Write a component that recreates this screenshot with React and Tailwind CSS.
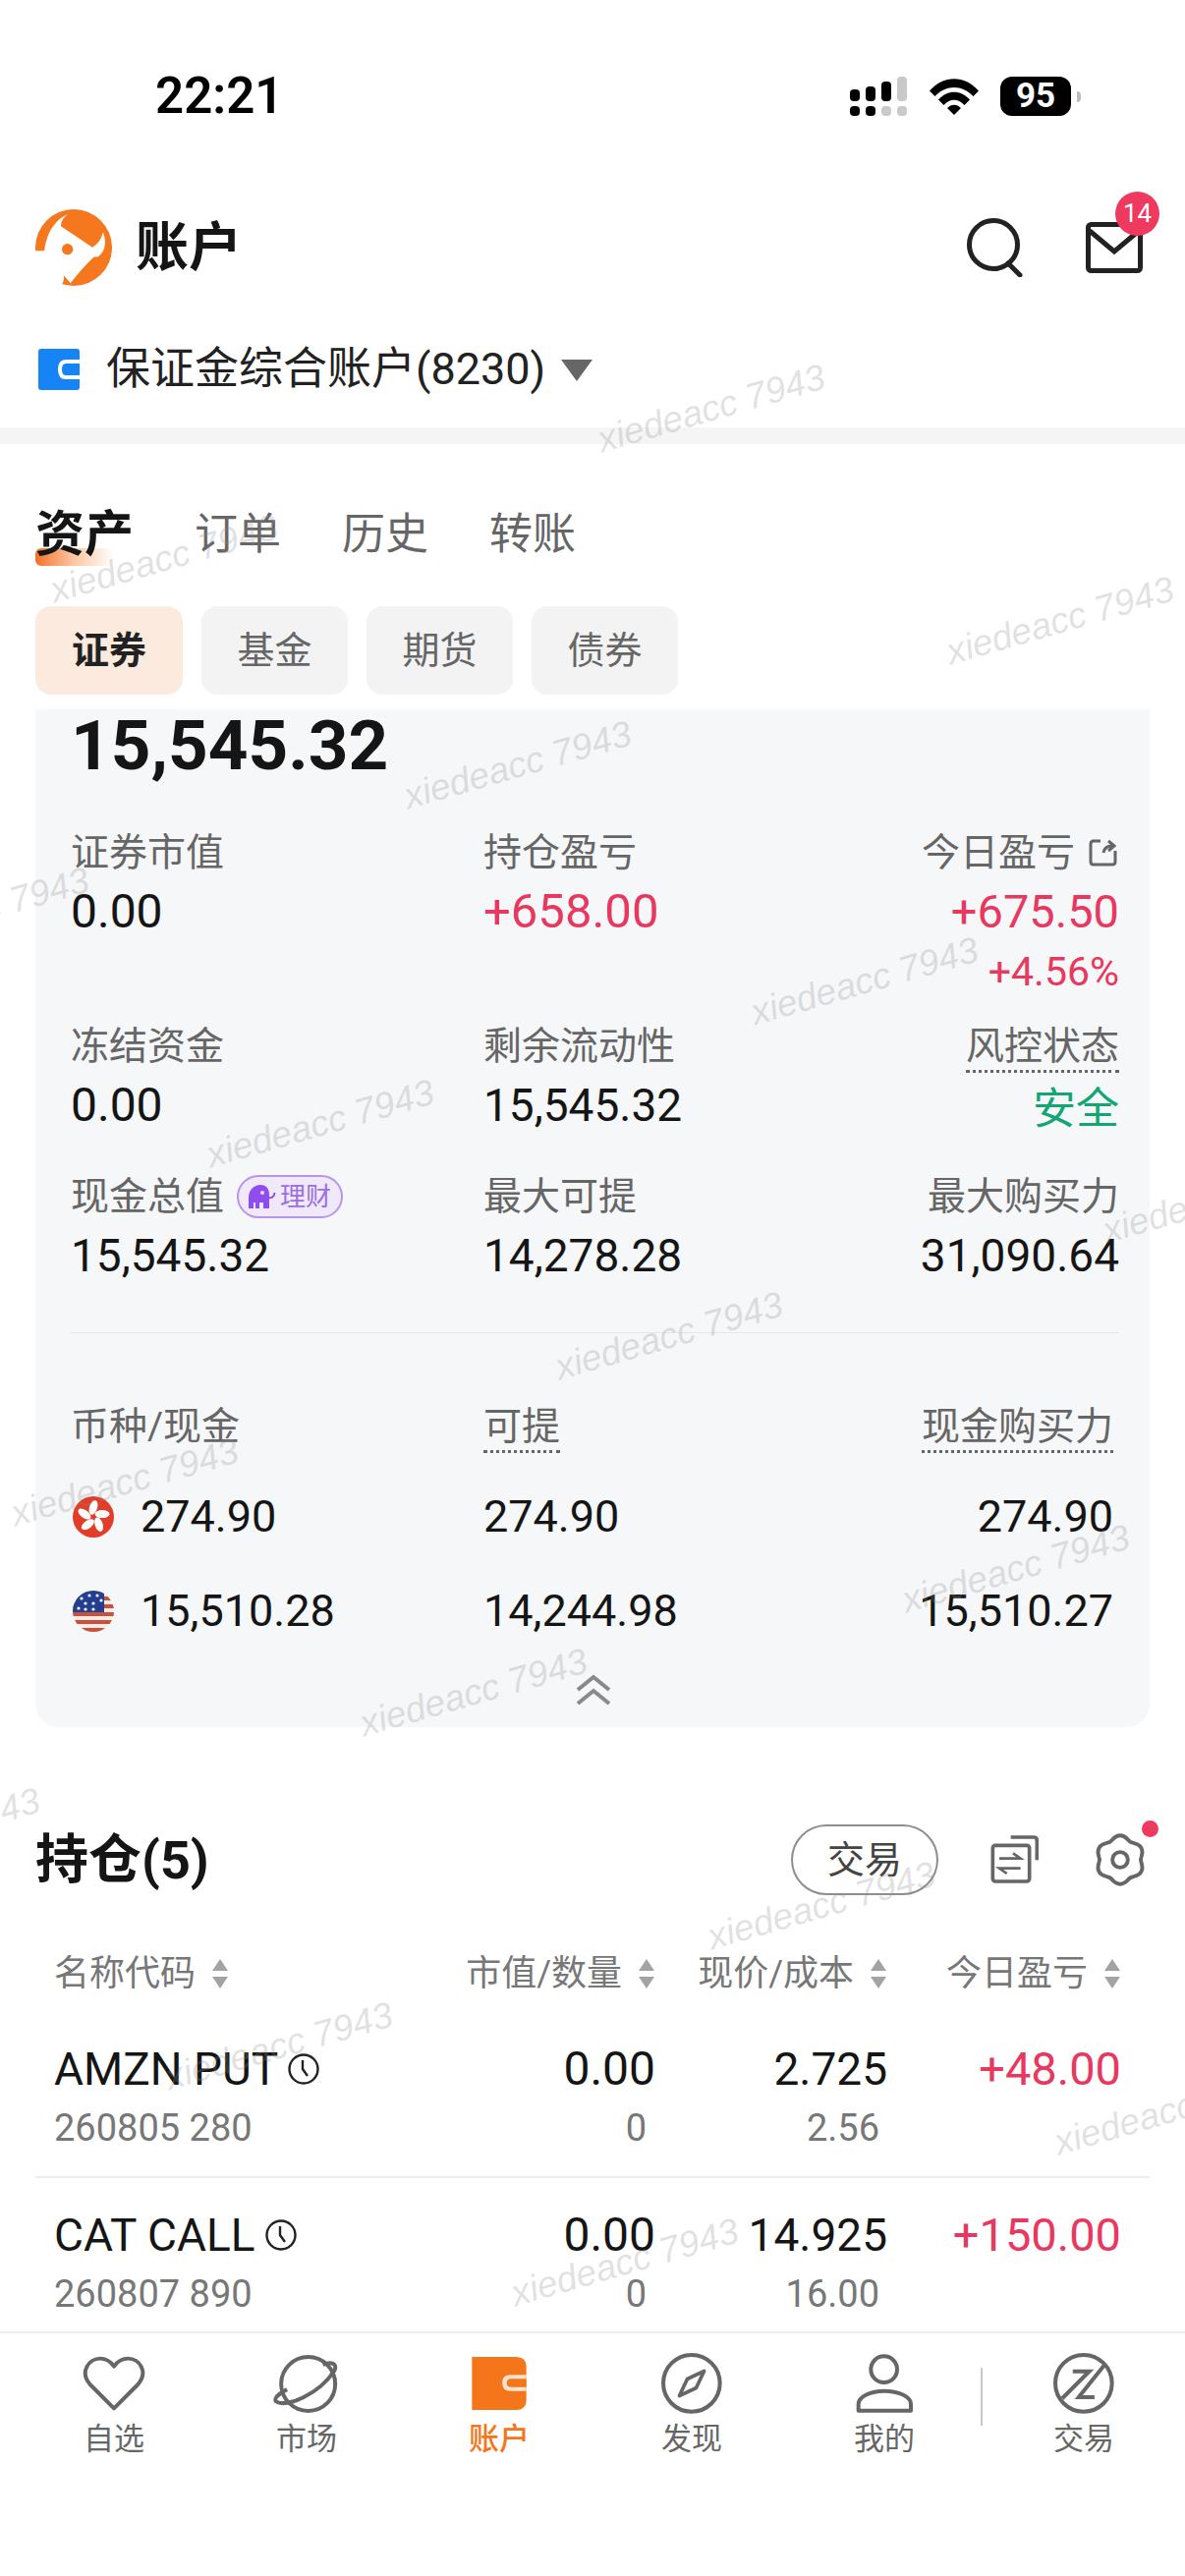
const watermarks = [
  'left-[604px] top-[394px]',
  'left-[47px] top-[547px]',
  'left-[959px] top-[610px]',
  'left-[407px] top-[757px]',
  'left-[760px] top-[977px]',
  'left-[206px] top-[1122px]',
  'left-[561px] top-[1338px]',
  'left-[7px] top-[1487px]',
  'left-[914px] top-[1575px]',
  'left-[362px] top-[1701px]',
  'left-[716px] top-[1918px]',
  'left-[164px] top-[2061px]',
  'left-[516px] top-[2281px]',
  'left-[-145px] top-[906px]',
  'left-[1118px] top-[1199px]',
  'left-[-195px] top-[1843px]',
  'left-[1069px] top-[2127px]',
];

const gearPath = (() => {
  const pt = (r, deg) => {
    const a = (deg * Math.PI) / 180;
    return `${(50 + r * Math.cos(a)).toFixed(1)} ${(50 + r * Math.sin(a)).toFixed(1)}`;
  };
  let d = `M${pt(39, -112)}`;
  for (let k = 0; k < 6; k++) {
    const a = -90 + k * 60;
    d += ` Q${pt(52, a)} ${pt(39, a + 22)} Q${pt(36, a + 30)} ${pt(39, a + 38)}`;
  }
  return d + 'Z';
})();

function Logo() {
  return (
    <svg width="78" height="78" viewBox="48 70 234 234">
      <circle cx="165" cy="187" r="117" fill="#f5781e" />
      <path
        d="M30 197 L75 197 Q82 150 100 125 Q115 100 148 84 Q125 100 126 122 L222 186 Q245 175 255 140 Q272 190 240 215 L226 216 Q190 250 155 296 L135 272 Q140 320 60 320 L30 320 Z"
        fill="#fff"
      />
      <circle cx="146" cy="192" r="17" fill="#f5781e" />
    </svg>
  );
}

function Wifi() {
  return (
    <svg width="50" height="37" viewBox="0 0 50 37">
      <path d="M0 12.5 C14 -4 36 -4 50 12.5 L44.5 18 C33 6 17 6 5.5 18 Z" fill="#000" />
      <path d="M9 21.5 C18 11 32 11 41 21.5 L35.5 27 C29 20 21 20 14.5 27 Z" fill="#000" />
      <path d="M18 30 C22 25.5 28 25.5 32 30 L25 37 Z" fill="#000" />
    </svg>
  );
}

function Signal() {
  return (
    <svg width="60" height="40" viewBox="0 0 60 40">
      <rect x="0" y="13" width="10" height="12" rx="4" fill="#000" />
      <rect x="16" y="10" width="10" height="15" rx="4" fill="#000" />
      <rect x="32" y="5" width="10" height="20" rx="4" fill="#000" />
      <rect x="48" y="0" width="10" height="25" rx="4" fill="#c9c9c9" />
      <rect x="0" y="30" width="10" height="10" rx="4" fill="#000" />
      <rect x="16" y="30" width="10" height="10" rx="4" fill="#000" />
      <rect x="32" y="30" width="10" height="10" rx="4" fill="#c9c9c9" />
      <rect x="48" y="30" width="10" height="10" rx="4" fill="#c9c9c9" />
    </svg>
  );
}

function ShareIcon() {
  return (
    <svg width="31" height="30" viewBox="0 0 31 30" fill="none" stroke="#666" strokeWidth="3">
      <path d="M12 3 H5 Q2 3 2 6 V24 Q2 27 5 27 H24 Q27 27 27 24 V13" />
      <path d="M15 15 Q16 8 24 8 M20 3 L26 8 L20 13" />
    </svg>
  );
}

function Elephant() {
  return (
    <svg width="28" height="24" viewBox="0 0 28 24">
      <path
        d="M0 24 V13 C0 5 6 0 12 0 C18 0 21 4 21 10 V24 H15 V18 H11 V24 H7 V18 H5 V24 Z"
        fill="#8f4df0"
      />
      <path d="M20 13 Q26 14 26.5 8" fill="none" stroke="#8f4df0" strokeWidth="2" />
      <circle cx="14" cy="8" r="2" fill="#f6d9ef" />
    </svg>
  );
}

function HkFlag() {
  return (
    <svg width="42" height="42" viewBox="0 0 42 42">
      <circle cx="21" cy="21" r="21" fill="#e23d28" />
      {[0, 72, 144, 216, 288].map((deg) => (
        <ellipse key={deg} cx="21" cy="11.5" rx="4" ry="7.5" fill="#fff" transform={`rotate(${deg} 21 21) rotate(18 21 11.5)`} />
      ))}
    </svg>
  );
}

function UsFlag() {
  const stripes = [6, 14, 22, 30, 38];
  return (
    <svg width="42" height="42" viewBox="0 0 42 42">
      <defs>
        <clipPath id="usClip">
          <circle cx="21" cy="21" r="21" />
        </clipPath>
      </defs>
      <g clipPath="url(#usClip)">
        <rect width="42" height="42" fill="#f8ece6" />
        {stripes.map((y) => (
          <rect key={y} x="0" y={y} width="42" height="4" fill="#c9503f" />
        ))}
        <rect x="0" y="0" width="32" height="22" fill="#22408f" />
        {[[9, 8], [17, 5], [25, 5], [6, 18], [13, 13], [21, 13], [29, 10], [13, 19], [21, 19]].map(([x, y]) => (
          <circle key={`${x}-${y}`} cx={x} cy={y} r="1.6" fill="#fff" />
        ))}
      </g>
    </svg>
  );
}

function Sort() {
  return (
    <svg className="shrink-0" width="18" height="30" viewBox="0 0 18 30" fill="#a3a3a3">
      <path d="M9 0 L17 12 H1 Z" />
      <path d="M1 18 H17 L9 30 Z" />
    </svg>
  );
}

function Clock() {
  return (
    <svg width="32" height="32" viewBox="0 0 32 32" fill="none" stroke="#222" strokeWidth="2.4">
      <circle cx="16" cy="16" r="14.5" />
      <path d="M15 7 V16 L20 23" />
    </svg>
  );
}

function Label({ children, className = '' }) {
  return <div className={`text-[39px] leading-[60px] text-[#666] ${className}`}>{children}</div>;
}

function Value({ children, className = 'text-[46px] text-[#151515]' }) {
  return <div className={`leading-[60px] ${className}`}>{children}</div>;
}

function Dotted({ children }) {
  return <span className="inline-block h-[52px] border-b-[3px] border-dotted border-[#666] leading-[50px]">{children}</span>;
}

function HeadCell({ children, className = '' }) {
  return (
    <div className={`flex items-center gap-[16px] whitespace-nowrap ${className}`}>
      <span>{children}</span>
      <Sort />
    </div>
  );
}

function Position({ name, code, value, qty, price, cost, pnl }) {
  return (
    <div className="grid grid-cols-[421px_191px_236px_238px] pl-[19px] text-[46px] leading-[60px]">
      <div className="flex items-center gap-[10px] text-[#151515]">
        <span>{name}</span>
        <Clock />
      </div>
      <div className="text-right text-[48px] text-[#151515]">{value}</div>
      <div className="text-right text-[#151515]">{price}</div>
      <div className="text-right text-[47px] text-[#e8385f]">{pnl}</div>
      <div className="text-[38px] text-[#777]">{code}</div>
      <div className="pr-[9px] text-right text-[38px] text-[#777]">{qty}</div>
      <div className="pr-[8px] text-right text-[38px] text-[#777]">{cost}</div>
      <div />
    </div>
  );
}

function NavItem({ icon, label, active, className = '' }) {
  return (
    <div className={`flex w-[196px] flex-col items-center ${className}`}>
      <div className="flex h-[62px] items-center justify-center">{icon}</div>
      <div className={`mt-[6px] text-[31px] leading-[40px] ${active ? 'font-medium text-[#f5761a]' : 'text-[#666]'}`}>{label}</div>
    </div>
  );
}

export default function App() {
  return (
    <div className="relative h-[2622px] w-[1206px] overflow-hidden bg-white font-['Roboto','Noto_Sans_CJK_SC',sans-serif]">
      <div className="flex h-[196px] items-center pl-[158px] pr-[106px]">
        <div className="text-[51px] font-semibold text-black">22:21</div>
        <div className="ml-auto flex items-center">
          <Signal />
          <div className="ml-[21px]"><Wifi /></div>
          <div className="ml-[22px] flex h-[40px] w-[72px] items-center justify-center rounded-[12px] bg-black text-[35px] font-bold text-white">95</div>
          <div className="ml-[6px] h-[11px] w-[4px] rounded-r-full bg-[#bdbdbd]" />
        </div>
      </div>

      <div className="flex h-[112px] items-center pl-[36px] pr-[43px]">
        <Logo />
        <div className="ml-[24px] text-[54px] font-bold text-[#151515]">账户</div>
        <div className="ml-auto flex items-center">
          <svg width="58" height="60" viewBox="0 0 58 60" fill="none" stroke="#222" strokeWidth="5">
            <circle cx="27" cy="27" r="24.5" />
            <path d="M42 46 L54 58" strokeLinecap="round" />
          </svg>
          <div className="relative ml-[63px]">
            <svg width="58" height="52" viewBox="0 0 58 52" fill="none" stroke="#222" strokeWidth="5">
              <rect x="2.5" y="2.5" width="53" height="47" rx="3" />
              <path d="M4 9 L29 30 L54 9" />
            </svg>
            <div className="absolute left-[30px] top-[-31px] flex h-[45px] w-[45px] items-center justify-center rounded-full bg-[#ee3a5e] text-[26px] text-white">14</div>
          </div>
        </div>
      </div>

      <div className="h-[127px] pl-[39px] pt-[47px]">
        <div className="flex h-[42px] items-center">
          <svg width="42" height="42" viewBox="0 0 42 42">
            <rect width="42" height="42" rx="3" fill="#1784f5" />
            <path d="M42 13 H28 Q22 13 22 21 Q22 29 28 29 H42" fill="none" stroke="#fff" strokeWidth="4" />
          </svg>
          <div className="ml-[27px] text-[45px] text-[#222]">保证金综合账户(8230)</div>
          <svg className="ml-[16px] mt-[2px]" width="32" height="22" viewBox="0 0 32 22" fill="#666">
            <path d="M0 0 H32 L16 22 Z" />
          </svg>
        </div>
      </div>
      <div className="h-[17px] bg-[#f5f5f6]" />

      <div className="mt-[62px] flex h-[60px] items-center gap-[62px] pl-[36px] text-[44px] text-[#666]">
        <div className="relative w-[100px] text-[50px] font-bold text-[#151515]">
          <div className="absolute left-0 top-[51px] h-[18px] w-[80px] rounded-l-[6px] bg-gradient-to-r from-[#f2701a] via-[#fbc9a5] to-white/0" />
          <span className="relative">资产</span>
        </div>
        <div>订单</div>
        <div>历史</div>
        <div>转账</div>
      </div>

      <div className="mt-[43px] flex gap-[19px] pl-[36px] text-[38px] text-[#666]">
        <div className="flex h-[90px] w-[150px] items-center justify-center rounded-[16px] bg-[#fdeadf] font-bold text-[#222]">证券</div>
        <div className="flex h-[90px] w-[149px] items-center justify-center rounded-[16px] bg-[#f3f3f4]">基金</div>
        <div className="flex h-[90px] w-[149px] items-center justify-center rounded-[16px] bg-[#f3f3f4]">期货</div>
        <div className="flex h-[90px] w-[149px] items-center justify-center rounded-[16px] bg-[#f3f3f4]">债券</div>
      </div>

      <div className="mx-[36px] mt-[15px] h-[1036px] rounded-b-[24px] bg-[#f6f7f9] pl-[36px] pr-[31px] pt-[2px]">
        <div className="text-[71px] font-bold leading-[70px] text-[#151515]">15,545.32</div>

        <div className="mt-[44px] grid grid-cols-[420px_1fr_auto]">
          <div>
            <Label>证券市值</Label>
            <Value className="text-[48px] text-[#151515]">0.00</Value>
          </div>
          <div>
            <Label>持仓盈亏</Label>
            <Value className="text-[49px] text-[#e8385f]">+658.00</Value>
          </div>
          <div className="text-right">
            <Label className="flex items-center justify-end gap-[14px]">
              今日盈亏 <ShareIcon />
            </Label>
            <Value className="text-[47px] text-[#e8385f]">+675.50</Value>
            <div className="mt-[8px] text-[41px] leading-[46px] text-[#e8385f]">+4.56%</div>
          </div>

          <div className="mt-[23px]">
            <Label>冻结资金</Label>
            <Value className="text-[48px] text-[#151515]">0.00</Value>
          </div>
          <div className="mt-[23px]">
            <Label>剩余流动性</Label>
            <Value>15,545.32</Value>
          </div>
          <div className="mt-[23px] text-right">
            <Label className="h-[60px]"><Dotted>风控状态</Dotted></Label>
            <Value className="mt-[4px] text-[44px] text-[#12a672]">安全</Value>
          </div>

          <div className="mt-[29px]">
            <Label className="flex items-center gap-[13px]">
              现金总值
              <span className="flex h-[44px] w-[108px] items-center justify-center gap-[4px] rounded-full border-2 border-[#b795ea] bg-[#efe9fb] text-[26px] text-[#9b6fe0]">
                <Elephant />
                理财
              </span>
            </Label>
            <Value>15,545.32</Value>
          </div>
          <div className="mt-[29px]">
            <Label>最大可提</Label>
            <Value>14,278.28</Value>
          </div>
          <div className="mt-[29px] text-right">
            <Label>最大购买力</Label>
            <Value>31,090.64</Value>
          </div>
        </div>

        <div className="mt-[48px] h-[1px] bg-[#e6e6e8]" />

        <div className="mt-[65px] grid grid-cols-[420px_1fr_auto] pr-[6px]">
          <Label>币种/现金</Label>
          <Label><Dotted>可提</Dotted></Label>
          <Label className="text-right"><Dotted>现金购买力</Dotted></Label>

          <Value className="mt-[32px] flex items-center gap-[27px] text-[45px] text-[#151515]"><span className="ml-[2px]"><HkFlag /></span>274.90</Value>
          <Value className="mt-[32px] text-[45px] text-[#151515]">274.90</Value>
          <Value className="mt-[32px] text-right text-[45px] text-[#151515]">274.90</Value>

          <Value className="mt-[36px] flex items-center gap-[27px] text-[45px] text-[#151515]"><span className="ml-[2px]"><UsFlag /></span>15,510.28</Value>
          <Value className="mt-[36px] text-[45px] text-[#151515]">14,244.98</Value>
          <Value className="mt-[36px] text-right text-[45px] text-[#151515]">15,510.27</Value>
        </div>

        <div className="mt-[34px] flex justify-center pr-[4px]">
          <svg width="36" height="32" viewBox="0 0 36 32" fill="none" stroke="#8a8a8a" strokeWidth="4">
            <path d="M2 16 L18 3 L34 16" />
            <path d="M2 30 L18 17 L34 30" />
          </svg>
        </div>
      </div>

      <div className="mt-[100px] flex h-[70px] items-center pl-[36px] pr-[38px]">
        <div className="text-[54px] font-bold text-[#151515]">持仓(5)</div>
        <div className="ml-auto flex h-[72px] w-[150px] items-center justify-center rounded-full border-2 border-[#8e8e8e] text-[38px] text-[#444]">交易</div>
        <svg className="ml-[52px]" width="50" height="50" viewBox="650 80 150 148" fill="none" stroke="#666" strokeWidth="11">
          <rect x="660" y="110" width="112" height="110" rx="8" />
          <path d="M715 85 H785 Q795 85 795 95 V155" />
          <path d="M680 150 H745 L722 134 M745 180 H680 L703 196" strokeWidth="8" />
        </svg>
        <div className="relative ml-[55px]">
          <svg width="56" height="56" viewBox="0 0 100 100" fill="none" stroke="#666" strokeWidth="7">
            <path d={gearPath} strokeLinejoin="round" />
            <circle cx="50" cy="50" r="14" />
          </svg>
          <div className="absolute left-[50px] top-[-12px] h-[17px] w-[17px] rounded-full bg-[#ee3a5e]" />
        </div>
      </div>

      <div className="mt-[54px] grid h-[50px] grid-cols-[421px_191px_236px_238px] items-center pl-[55px] text-[36px] text-[#777]">
        <HeadCell>名称代码</HeadCell>
        <HeadCell className="justify-end">市值/数量</HeadCell>
        <HeadCell className="justify-end">现价/成本</HeadCell>
        <HeadCell className="justify-end">今日盈亏</HeadCell>
      </div>

      <div className="mx-[36px] mt-[44px] h-[141px] border-b-2 border-[#ececee]">
        <Position name="AMZN PUT" code="260805 280" value="0.00" qty="0" price="2.725" cost="2.56" pnl="+48.00" />
      </div>
      <div className="mx-[36px] h-[156px] pt-[28px]">
        <Position name="CAT CALL" code="260807 890" value="0.00" qty="0" price="14.925" cost="16.00" pnl="+150.00" />
      </div>

      <div className="flex h-[250px] border-t-2 border-[#ececee] bg-white pl-[18px] pt-[20px]">
        <NavItem
          label="自选"
          icon={
            <svg width="66" height="56" viewBox="68 52 200 170" fill="none" stroke="#666" strokeWidth="12" strokeLinejoin="round">
              <path d="M168 214 L94 140 C60 100 92 60 125 60 C145 60 158 70 168 84 C178 70 192 60 212 60 C245 60 276 100 242 140 Z" />
            </svg>
          }
        />
        <NavItem
          label="市场"
          icon={
            <svg width="70" height="63" viewBox="650 40 210 190" fill="none" stroke="#666" strokeWidth="12">
              <circle cx="760" cy="135" r="83" />
              <path d="M695 152 C660 170 652 185 665 191 C695 205 790 170 840 95 C852 72 830 65 805 76" />
            </svg>
          }
        />
        <NavItem
          label="账户"
          active
          icon={
            <svg width="56" height="54" viewBox="1262 55 167 163">
              <path d="M1262 55 H1398 Q1429 55 1429 86 V187 Q1429 218 1398 218 H1262 Z" fill="#f5761a" />
              <path d="M1429 110 H1380 Q1355 110 1355 135 Q1355 160 1380 160 H1429 Z" fill="#fde3cf" />
              <path d="M1429 122 H1382 Q1369 122 1369 135 Q1369 148 1382 148 H1429 Z" fill="#f5761a" />
            </svg>
          }
        />
        <NavItem
          label="发现"
          icon={
            <svg width="62" height="62" viewBox="70 42 185 185" fill="none" stroke="#666" strokeWidth="12">
              <circle cx="162" cy="134" r="86" />
              <path d="M200 97 L176 148 L125 172 L149 121 Z" strokeWidth="11" strokeLinejoin="round" />
            </svg>
          }
        />
        <NavItem
          label="我的"
          icon={
            <svg width="58" height="60" viewBox="665 45 172 180" fill="none" stroke="#666" strokeWidth="12">
              <circle cx="750" cy="92" r="40" />
              <path d="M672 218 V198 C672 175 710 158 750 158 C795 158 832 175 832 198 V218 Z" strokeLinejoin="round" />
            </svg>
          }
        />
        <div className="mt-[15px] h-[59px] w-[2px] bg-[#c8c8c8]" />
        <NavItem
          label="交易"
          className="ml-[5px]"
          icon={
            <svg width="62" height="62" viewBox="1263 42 185 185" fill="none" stroke="#666" strokeWidth="12">
              <circle cx="1355" cy="134" r="86" />
              <path d="M1322 98 H1372 L1290 180" />
              <path d="M1420 76 L1340 176 H1388" />
            </svg>
          }
        />
      </div>

      {watermarks.map((pos) => (
        <div
          key={pos}
          className={`pointer-events-none absolute w-[240px] -rotate-[16deg] whitespace-nowrap text-center font-['Liberation_Sans',sans-serif] text-[37px] italic leading-[44px] text-[#8a8a8a]/25 ${pos}`}
        >
          xiedeacc 7943
        </div>
      ))}
    </div>
  );
}
